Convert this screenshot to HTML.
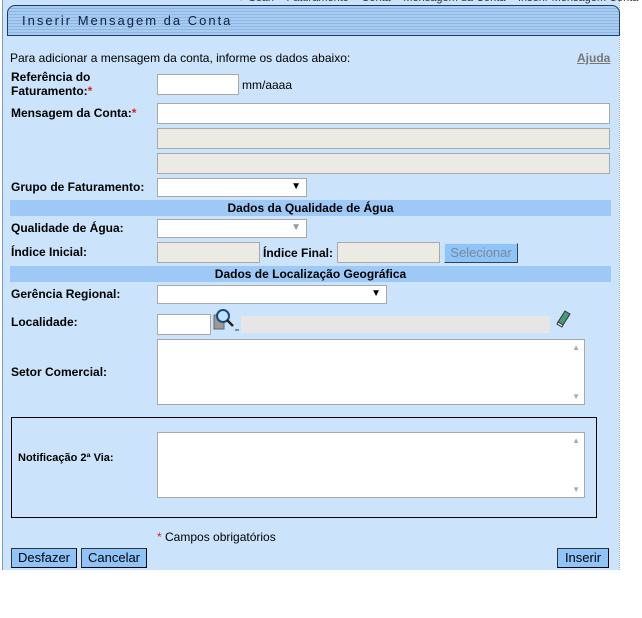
<!DOCTYPE html>
<html><head><meta charset="utf-8">
<style>
body{margin:0;width:642px;height:618px;background:#fff;position:relative;overflow:hidden;font-family:"Liberation Sans",Arial,sans-serif;font-size:12px;color:#000}
.pg{position:absolute;left:2px;top:0;width:616px;height:570px;background:#cbe3fb;border-left:1px solid #7a9cc0}
.rb{position:absolute;left:619px;top:0;width:2px;height:570px;border-left:1px dotted #8fb0d6}
.a{position:absolute;white-space:nowrap}
.b{font-weight:bold}
.hd{position:absolute;left:7px;top:5px;width:611px;height:29px;border:1px solid #1a3a6a;border-radius:8px 8px 0 0;background:repeating-linear-gradient(#a8cbf0 0 2px,#8cb6e6 2px 3px)}
.hd span{position:absolute;left:14px;top:7px;font-size:13px;letter-spacing:2px;color:#102040}
.in{position:absolute;background:#fff;border:1px solid #a9a9a9;box-sizing:border-box}
.dis{background:#ebebe4}
.sec{position:absolute;left:10px;width:601px;height:16px;background:#9ec9f6;font-weight:bold;text-align:center;line-height:16px}
.btn{position:absolute;background:#8fc4f8;border:1px solid #333;border-right-color:#000;border-bottom-color:#000;box-sizing:border-box;text-align:center;font-size:13px;line-height:18px;height:20px}
.r{color:#e02020}
.arr{position:absolute;right:5px;top:2px;font-size:10px}
</style></head><body>
<div class="pg"></div><div class="rb"></div>
<div class="a" style="left:238px;top:-8px;font-size:11px;color:#333">● Gsan &gt; Faturamento &gt; Conta &gt; Mensagem da Conta &gt; Inserir Mensagem Conta</div>
<div class="hd"><span>Inserir Mensagem da Conta</span></div>
<div class="a" style="left:10px;top:51px">Para adicionar a mensagem da conta, informe os dados abaixo:</div>
<div class="a b" style="left:577px;top:51px;color:#777;text-decoration:underline">Ajuda</div>
<div class="a b" style="left:11px;top:70px;line-height:14px">Referência do<br>Faturamento:<span class="r">*</span></div>
<div class="in" style="left:157px;top:74px;width:82px;height:21px"></div>
<div class="a" style="left:242px;top:78px">mm/aaaa</div>
<div class="a b" style="left:11px;top:106px">Mensagem da Conta:<span class="r">*</span></div>
<div class="in" style="left:157px;top:103px;width:453px;height:21px"></div>
<div class="in dis" style="left:157px;top:128px;width:453px;height:21px"></div>
<div class="in dis" style="left:157px;top:153px;width:453px;height:21px"></div>
<div class="a b" style="left:11px;top:180px">Grupo de Faturamento:</div>
<div class="in" style="left:157px;top:178px;width:150px;height:19px"><span class="arr">▼</span></div>
<div class="sec" style="top:200px">Dados da Qualidade de Água</div>
<div class="a b" style="left:11px;top:221px">Qualidade de Água:</div>
<div class="in" style="left:157px;top:219px;width:150px;height:19px"><span class="arr" style="color:#999">▼</span></div>
<div class="a b" style="left:11px;top:245px">Índice Inicial:</div>
<div class="in dis" style="left:157px;top:242px;width:103px;height:21px"></div>
<div class="a b" style="left:263px;top:246px">Índice Final:</div>
<div class="in dis" style="left:337px;top:242px;width:103px;height:21px"></div>
<div class="btn" style="left:444px;top:243px;width:74px;color:#7a8a9a;border-color:#cde #345 #345 #cde">Selecionar</div>
<div class="sec" style="top:266px">Dados de Localização Geográfica</div>
<div class="a b" style="left:11px;top:287px">Gerência Regional:</div>
<div class="in" style="left:157px;top:285px;width:230px;height:19px"><span class="arr">▼</span></div>
<div class="a b" style="left:11px;top:315px">Localidade:</div>
<div class="in" style="left:157px;top:314px;width:54px;height:21px"></div>
<svg class="a" style="left:213px;top:307px" width="28" height="28" viewBox="0 0 28 28"><rect x="1" y="8" width="10" height="14" fill="#999" stroke="#666"/><circle cx="10" cy="9" r="6" fill="#bfe3ff" stroke="#1a4a7a" stroke-width="2"/><line x1="14" y1="13" x2="20" y2="19" stroke="#222" stroke-width="2.5"/><line x1="22" y1="23" x2="26" y2="23" stroke="#333"/></svg>
<div class="a" style="left:241px;top:316px;width:309px;height:17px;background:#e6e6e6"></div>
<svg class="a" style="left:554px;top:308px" width="18" height="20" viewBox="0 0 18 20"><path d="M4 14 L11 3 L16 6 L9 17 Z" fill="#4a9a7a" stroke="#333"/><path d="M4 14 L9 17 L8 19 L3 16 Z" fill="#eee" stroke="#333"/></svg>
<div class="a b" style="left:11px;top:365px">Setor Comercial:</div>
<div class="in" style="left:157px;top:339px;width:428px;height:66px"><span class="a" style="right:4px;top:3px;font-size:8px;color:#aaa">▲</span><span class="a" style="right:4px;bottom:3px;font-size:8px;color:#aaa">▼</span></div>
<div class="a" style="left:11px;top:417px;width:584px;height:99px;border:1px solid #000"></div>
<div class="a b" style="left:18px;top:452px;font-size:11px">Notificação 2ª Via:</div>
<div class="in" style="left:157px;top:432px;width:428px;height:66px"><span class="a" style="right:4px;top:3px;font-size:8px;color:#aaa">▲</span><span class="a" style="right:4px;bottom:3px;font-size:8px;color:#aaa">▼</span></div>
<div class="a" style="left:157px;top:530px"><span class="r">*</span> Campos obrigatórios</div>
<div class="btn" style="left:11px;top:548px;width:66px">Desfazer</div>
<div class="btn" style="left:81px;top:548px;width:66px">Cancelar</div>
<div class="btn" style="left:557px;top:548px;width:52px">Inserir</div>
</body></html>
